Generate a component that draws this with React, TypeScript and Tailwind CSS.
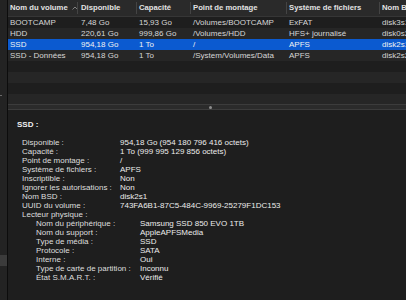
import type { FC } from "react";

const volumes = [
    { name: "BOOTCAMP", free: "7,48 Go", size: "15,93 Go", mount: "/Volumes/BOOTCAMP", fs: "ExFAT", bsd: "disk3s1" },
    { name: "HDD", free: "220,61 Go", size: "999,86 Go", mount: "/Volumes/HDD", fs: "HFS+ journalisé", bsd: "disk0s2" },
    { name: "SSD", free: "954,18 Go", size: "1 To", mount: "/", fs: "APFS", bsd: "disk2s1" },
    { name: "SSD - Données", free: "954,18 Go", size: "1 To", mount: "/System/Volumes/Data", fs: "APFS", bsd: "disk2s2" },
];

const details: [string, string][] = [
    ["Disponible :", "954,18 Go (954 180 796 416 octets)"],
    ["Capacité :", "1 To (999 995 129 856 octets)"],
    ["Point de montage :", "/"],
    ["Système de fichiers :", "APFS"],
    ["Inscriptible :", "Non"],
    ["Ignorer les autorisations :", "Non"],
    ["Nom BSD :", "disk2s1"],
    ["UUID du volume :", "743FA6B1-87C5-484C-9969-25279F1DC153"],
];

const drive: [string, string][] = [
    ["Nom du périphérique :", "Samsung SSD 850 EVO 1TB"],
    ["Nom du support :", "AppleAPFSMedia"],
    ["Type de média :", "SSD"],
    ["Protocole :", "SATA"],
    ["Interne :", "Oui"],
    ["Type de carte de partition :", "Inconnu"],
    ["État S.M.A.R.T. :", "Vérifié"],
];

const cols = "grid grid-cols-[70px_59px_54px_96px_93px_1fr]";

const App: FC = () => {
    return (
        <div className="flex h-[300px] w-[406px] overflow-hidden bg-[#1e1e1e] font-['Liberation_Sans',Arial,sans-serif] text-[8px] antialiased">
            {/* sidebar edge */}
            <div className="flex w-[7px] flex-col bg-[#232323]">
                <div className="mt-[95px] h-px w-[2px] bg-[#6a6a6a]" />
                <div className="mt-[159px] h-[11px] bg-[#3b3b3b]" />
            </div>
            <div className="w-px bg-[#0c0c0c]" />

            <div className="flex min-w-0 flex-1 flex-col">
                {/* table */}
                <div className="h-[104px] overflow-hidden">
                    <div className={`${cols} h-[17px] whitespace-nowrap border-b border-[#363636] bg-[#2a2a2a] text-[7.7px] font-bold text-[#e2e2e2]`}>
                        <div className="my-[2px] flex items-center gap-[4px] overflow-hidden border-r border-[#444] pl-[2px]">
                            <span>Nom du volume</span>
                            <svg width="6" height="4" viewBox="0 0 6 4" className="shrink-0 text-[#8a8a8a]">
                                <path d="M0.5 3.5 L3 1 L5.5 3.5" fill="none" stroke="currentColor" strokeWidth="0.9" />
                            </svg>
                        </div>
                        <div className="my-[2px] flex items-center overflow-hidden border-r border-[#444] pl-[3px]">Disponible</div>
                        <div className="my-[2px] flex items-center overflow-hidden border-r border-[#444] pl-[2px]">Capacité</div>
                        <div className="my-[2px] flex items-center overflow-hidden border-r border-[#444] pl-[2px]">Point de montage</div>
                        <div className="my-[2px] flex items-center overflow-hidden border-r border-[#444] pl-[2px]">Système de fichiers</div>
                        <div className="my-[2px] flex items-center overflow-hidden pl-[2px]">Nom BSD</div>
                    </div>

                    {volumes.map((v, i) => (
                        <div
                            key={v.name}
                            className={`${cols} h-[11px] whitespace-nowrap leading-[11px] ${
                                i === 2
                                    ? "bg-[#0b5ad0] text-[#f2f2f2]"
                                    : i % 2 === 1
                                    ? "bg-[#262626] text-[#d6d6d6]"
                                    : "bg-[#1e1e1e] text-[#d6d6d6]"
                            }`}
                        >
                            <div className="overflow-hidden pl-[2px]">{v.name}</div>
                            <div className="overflow-hidden pl-[3px]">{v.free}</div>
                            <div className="overflow-hidden pl-[2px]">{v.size}</div>
                            <div className="overflow-hidden pl-[2px]">{v.mount}</div>
                            <div className="overflow-hidden pl-[2px]">{v.fs}</div>
                            <div className="overflow-hidden pl-[2px]">{v.bsd}</div>
                        </div>
                    ))}

                    {[0, 1, 2, 3].map((i) => (
                        <div key={i} className={`h-[11px] ${i % 2 === 0 ? "bg-[#1e1e1e]" : "bg-[#262626]"}`} />
                    ))}
                </div>

                {/* split divider */}
                <div className="flex h-[6px] items-center justify-center border-y border-[#3c3c3c] bg-[#2b2b2b] pl-[7px]">
                    <div className="h-[3px] w-[3px] rounded-full bg-[#8e8e8e]" />
                </div>

                {/* details */}
                <div className="flex-1 bg-[#1e1e1e] pt-[10px] leading-[9px] text-[#dedede]">
                    <div className="pl-[9px] font-bold text-[#f0f0f0]">SSD :</div>
                    <div className="mt-[9px]">
                        {details.map(([k, v]) => (
                            <div key={k} className="flex whitespace-nowrap pl-[14px]">
                                <span className="w-[98px] shrink-0">{k}</span>
                                <span className="text-[#ececec]">{v}</span>
                            </div>
                        ))}
                        <div className="pl-[14px]">Lecteur physique :</div>
                        {drive.map(([k, v]) => (
                            <div key={k} className="flex whitespace-nowrap pl-[28px]">
                                <span className="w-[104px] shrink-0">{k}</span>
                                <span className="text-[#ececec]">{v}</span>
                            </div>
                        ))}
                    </div>
                </div>
            </div>
        </div>
    );
};

export default App;
